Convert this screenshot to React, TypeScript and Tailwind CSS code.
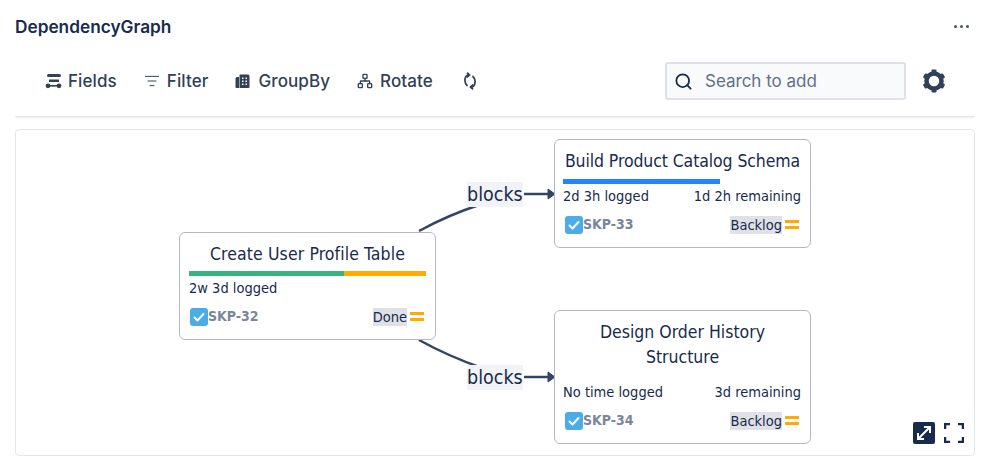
import { Search, ListFilter, Network } from "lucide-react";

const cardFont = "font-['DejaVu_Sans_Condensed','DejaVu_Sans',sans-serif] [font-stretch:condensed]";

function FieldsIcon() {
  return (
    <svg width="17" height="16" viewBox="0 0 17 16" className="text-slate-700">
      <rect x="2" y="1" width="14" height="3" rx="1.5" fill="currentColor" />
      <rect x="4" y="6.500" width="10" height="2.500" fill="currentColor" />
      <rect x="3" y="12" width="11" height="1.600" fill="currentColor" />
      <circle cx="3" cy="12.800" r="2.400" fill="currentColor" />
      <circle cx="14" cy="12.800" r="2.400" fill="currentColor" />
    </svg>
  );
}

function GroupIcon() {
  return (
    <svg width="16" height="16" viewBox="0 0 16 16" className="text-slate-700">
      <path d="M5 1.500h8a1.500 1.500 0 0 1 1.500 1.500v11a1 1 0 0 1-1 1H4.500V2z" fill="currentColor" />
      <path d="M.5 5.500A1.500 1.500 0 0 1 2 4h2v11H1.500a1 1 0 0 1-1-1z" fill="currentColor" />
      <path d="M7 4.500h1.500V6H7zM10.500 4.500H12V6h-1.500zM7 7.500h1.500V9H7zM10.500 7.500H12V9h-1.500zM7 10.500h1.500V12H7zM10.500 10.500H12V12h-1.500z" fill="white" />
    </svg>
  );
}

function RefreshIcon() {
  return (
    <svg width="16" height="18" viewBox="0 0 16 18" fill="none" stroke="currentColor" strokeWidth="1.700" className="ml-[2px] text-slate-700">
      <path d="M7.500 3H5.500C2 5.500 2 11 5.500 14" />
      <path d="M5 .7L7.500 3L5 5.300" />
      <path d="M8.500 15H10.500C14 12.500 14 7 10.500 4" />
      <path d="M11 12.700L8.500 15L11 17.300" />
    </svg>
  );
}

function GearIcon() {
  return (
    <svg width="24" height="24" viewBox="0 0 24 24" className="text-slate-700">
      <circle cx="12" cy="12" r="7.500" fill="none" stroke="currentColor" strokeWidth="4.500" />
      <g fill="currentColor">
        <rect x="9.500" y="0.500" width="5" height="5" rx="1" />
        <rect x="9.500" y="18.500" width="5" height="5" rx="1" />
        <rect x="9.500" y="0.500" width="5" height="5" rx="1" transform="rotate(60 12 12)" />
        <rect x="9.500" y="18.500" width="5" height="5" rx="1" transform="rotate(60 12 12)" />
        <rect x="9.500" y="0.500" width="5" height="5" rx="1" transform="rotate(120 12 12)" />
        <rect x="9.500" y="18.500" width="5" height="5" rx="1" transform="rotate(120 12 12)" />
      </g>
    </svg>
  );
}

function ToolButton({ icon, label, gap = "gap-2" }: { icon: React.ReactNode; label?: string; gap?: string }) {
  return (
    <div className={`flex items-center ${gap} text-[17px] font-medium text-slate-700`}>
      {icon}
      {label && <span className="pt-[2px] tracking-[0.1px]">{label}</span>}
    </div>
  );
}

function TaskCheck() {
  return (
    <svg width="18" height="18" viewBox="0 0 18 18">
      <rect width="18" height="18" rx="3" fill="#4bade8" />
      <path d="M4.500 9.500l3 3 6-6.500" fill="none" stroke="white" strokeWidth="2" strokeLinecap="round" strokeLinejoin="round" />
    </svg>
  );
}

type NodeProps = {
  title: string;
  pos: string;
  titleClass?: string;
  bar?: React.ReactNode;
  logged: string;
  remaining?: string;
  id: string;
  status: string;
  rowClass?: string;
};

function TaskNode({ title, pos, titleClass = "px-2", bar, logged, remaining, id, status, rowClass = "" }: NodeProps) {
  return (
    <div className={`absolute w-[257px] rounded-[6px] border border-[#b3b9c4] bg-white px-[9px] pb-[12px] pt-[9px] text-[#172b4d] ${cardFont} ${pos}`}>
      <div className={`text-center text-[17.500px] leading-[25px] ${titleClass}`}>{title}</div>
      {bar}
      <div className={`mt-[2px] flex justify-between text-[14.500px] leading-[20px] ${rowClass}`}>
        <span>{logged}</span>
        {remaining && <span>{remaining}</span>}
      </div>
      <div className="mt-[8px] flex items-center justify-between pl-[1px] pr-[2px]">
        <div className="flex items-center">
          <TaskCheck />
          <span className="text-[14px] font-bold text-[#7a869a]">{id}</span>
        </div>
        <div className="flex items-center gap-[3px]">
          <span className="bg-[#dfe1e6] text-[14.500px] leading-[18px]">{status}</span>
          <div className="flex w-[14px] flex-col gap-[3px]">
            <div className="h-[3px] bg-[#ffab00]" />
            <div className="h-[3px] bg-[#ffab00]" />
          </div>
        </div>
      </div>
    </div>
  );
}

function EdgeLabel({ pos }: { pos: string }) {
  return (
    <div className={`absolute bg-[#f1f3f7] pt-[1px] text-[19.500px] leading-[24px] text-[#172b4d] ${cardFont} ${pos}`}>blocks</div>
  );
}

export default function App() {
  return (
    <div className="h-[465px] w-[988px] overflow-hidden bg-white font-['Inter',sans-serif]">
      <div className="flex h-[52px] items-center justify-between pl-[15px] pr-[19px]">
        <h1 className="pt-[2px] text-[17.250px] font-semibold text-[#172b4d]">DependencyGraph</h1>
        <div className="flex gap-[3px]">
          <span className="h-[3px] w-[3px] rounded-full bg-slate-600" />
          <span className="h-[3px] w-[3px] rounded-full bg-slate-600" />
          <span className="h-[3px] w-[3px] rounded-full bg-slate-600" />
        </div>
      </div>

      <div className="ml-[15px] flex h-[65px] w-[960px] items-start justify-between border-b border-[#e4e6ea] pb-[16px] pl-[30px] pr-[29px] pt-[10px] shadow-[0_2px_2px_-1px_rgba(9,30,66,0.08)]">
        <div className="flex h-[38px] items-center gap-[27px]">
          <ToolButton icon={<FieldsIcon />} label="Fields" gap="gap-[6px]" />
          <ToolButton icon={<ListFilter size={16} strokeWidth={1.500} />} label="Filter" gap="gap-[7px]" />
          <ToolButton icon={<GroupIcon />} label="GroupBy" gap="gap-[7px]" />
          <ToolButton icon={<Network size={16} strokeWidth={2} />} label="Rotate" gap="gap-[7px]" />
          <ToolButton icon={<RefreshIcon />} />
        </div>
        <div className="flex items-center gap-[16px]">
          <div className="flex h-[38px] w-[241px] items-center gap-[12px] rounded-[3px] border-2 border-[#dfe1e6] bg-[#f8fafc] pl-[7px]">
            <Search size={19} strokeWidth={2.250} className="text-[#172b4d]" />
            <span className="pt-[2px] text-[17px] text-[#626f86]">Search to add</span>
          </div>
          <GearIcon />
        </div>
      </div>

      <div className="relative ml-[15px] mt-[12px] h-[327px] w-[960px] rounded-[4px] border border-[#e4e6ea]">
        <svg className="absolute left-0 top-0" width="958" height="325" fill="none" stroke="#344563" strokeWidth="2.500">
          <path d="M403 101 Q 432 85 466 74" />
          <path d="M508 64 H 532" />
          <path d="M532 59 L 539 64 L 532 69 Z" fill="#344563" strokeWidth="1" />
          <path d="M403 210 Q 432 226 466 238" />
          <path d="M508 247 H 532" />
          <path d="M532 242 L 539 247 L 532 252 Z" fill="#344563" strokeWidth="1" />
        </svg>

        <EdgeLabel pos="left-[451px] top-[52px]" />
        <EdgeLabel pos="left-[451px] top-[235px]" />

        <TaskNode
          title="Create User Profile Table"
          pos="left-[163px] top-[102px]"
          titleClass="px-0 tracking-[0.1px]"
          bar={
            <div className="mt-[4px] flex h-[5px]">
              <div className="w-[155px] bg-[#36b37e]" />
              <div className="flex-1 bg-[#ffab00]" />
            </div>
          }
          logged="2w 3d logged"
          id="SKP-32"
          status="Done"
        />
        <TaskNode
          title="Build Product Catalog Schema"
          pos="left-[538px] top-[9px]"
          titleClass="whitespace-nowrap px-0 tracking-[-0.1px]"
          bar={<div className="-ml-[1px] mt-[5px] h-[5px] w-[157px] bg-[#2684ff]" />}
          logged="2d 3h logged"
          remaining="1d 2h remaining"
          id="SKP-33"
          status="Backlog"
          rowClass="-ml-[1px]"
        />
        <TaskNode
          title="Design Order History Structure"
          pos="left-[538px] top-[180px]"
          bar={<div className="mt-[12px]" />}
          logged="No time logged"
          remaining="3d remaining"
          id="SKP-34"
          status="Backlog"
          rowClass="-ml-[1px]"
        />

        <div className="absolute bottom-[11px] right-[10px] flex items-center gap-[9px]">
          <div className="flex h-[22px] w-[22px] items-center justify-center rounded-[2px] bg-[#172b4d]">
            <svg width="18" height="18" viewBox="0 0 18 18" fill="none" stroke="white" strokeWidth="2">
              <path d="M3 15 L15 3 M9 3 H15 V9 M3 9 V15 H9" />
            </svg>
          </div>
          <svg width="20" height="20" viewBox="0 0 20 20" fill="none" stroke="#172b4d" strokeWidth="2.500">
            <path d="M1 6V1H6 M14 1H19V6 M19 14V19H14 M6 19H1V14" />
          </svg>
        </div>
      </div>
    </div>
  );
}
